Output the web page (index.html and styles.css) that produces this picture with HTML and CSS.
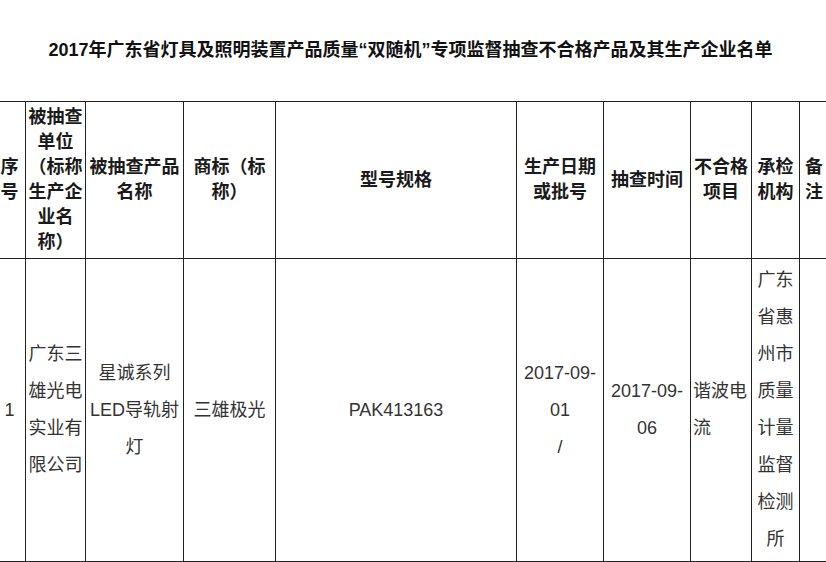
FILE: index.html
```html
<!DOCTYPE html>
<html lang="zh-CN">
<head>
<meta charset="utf-8">
<title>2017年广东省灯具及照明装置产品质量“双随机”专项监督抽查不合格产品及其生产企业名单</title>
<link rel="stylesheet" href="styles.css">
</head>
<body>
<div class="page">
  <h1 class="title">2017年广东省灯具及照明装置产品质量“双随机”专项监督抽查不合格产品及其生产企业名单</h1>
  <table class="list">
    <colgroup>
      <col class="c0"><col class="c1"><col class="c2"><col class="c3"><col class="c4">
      <col class="c5"><col class="c6"><col class="c7"><col class="c8"><col class="c9">
    </colgroup>
    <thead>
      <tr>
        <th>序号</th>
        <th>被抽查单位（标称生产企业名称）</th>
        <th>被抽查产品名称</th>
        <th>商标（标称）</th>
        <th>型号规格</th>
        <th>生产日期或批号</th>
        <th>抽查时间</th>
        <th>不合格项目</th>
        <th>承检机构</th>
        <th>备注</th>
      </tr>
    </thead>
    <tbody>
      <tr>
        <td>1</td>
        <td>广东三雄光电实业有限公司</td>
        <td>星诚系列LED导轨射灯</td>
        <td>三雄极光</td>
        <td>PAK413163</td>
        <td>2017-09-<wbr>01<br>/</td>
        <td>2017-09-<wbr>06</td>
        <td class="left">谐波电流</td>
        <td>广东省惠州市质量计量监督检测所</td>
        <td></td>
      </tr>
    </tbody>
  </table>
</div>
</body>
</html>
```

FILE: styles.css
```css
html, body {
  margin: 0;
  padding: 0;
  background: #ffffff;
  overflow: hidden;
}

body {
  font-family: "Liberation Sans", "Noto Sans CJK SC", sans-serif;
  color: #222222;
}

.page {
  width: 835px;
  margin-left: -7px;
  padding-top: 38px;
}

.title {
  margin: 0 0 39px 0;
  font-size: 18px;
  line-height: 24px;
  font-weight: bold;
  text-align: center;
  color: #111111;
}

.list {
  width: 835px;
  table-layout: fixed;
  border-collapse: collapse;
  font-size: 18px;
}

.c0 { width: 32px; }
.c1 { width: 60px; }
.c2 { width: 98px; }
.c3 { width: 92px; }
.c4 { width: 241px; }
.c5 { width: 87px; }
.c6 { width: 87px; }
.c7 { width: 61px; }
.c8 { width: 48px; }
.c9 { width: 29px; }

.list th,
.list td {
  border: 1px solid #222222;
  padding: 3px 2px;
  text-align: center;
  vertical-align: middle;
}

.list th {
  font-weight: bold;
  line-height: 25px;
  color: #1a1a1a;
}

.list td {
  font-weight: normal;
  line-height: 37px;
  color: #333333;
}

.list td.left {
  text-align: left;
}
```
